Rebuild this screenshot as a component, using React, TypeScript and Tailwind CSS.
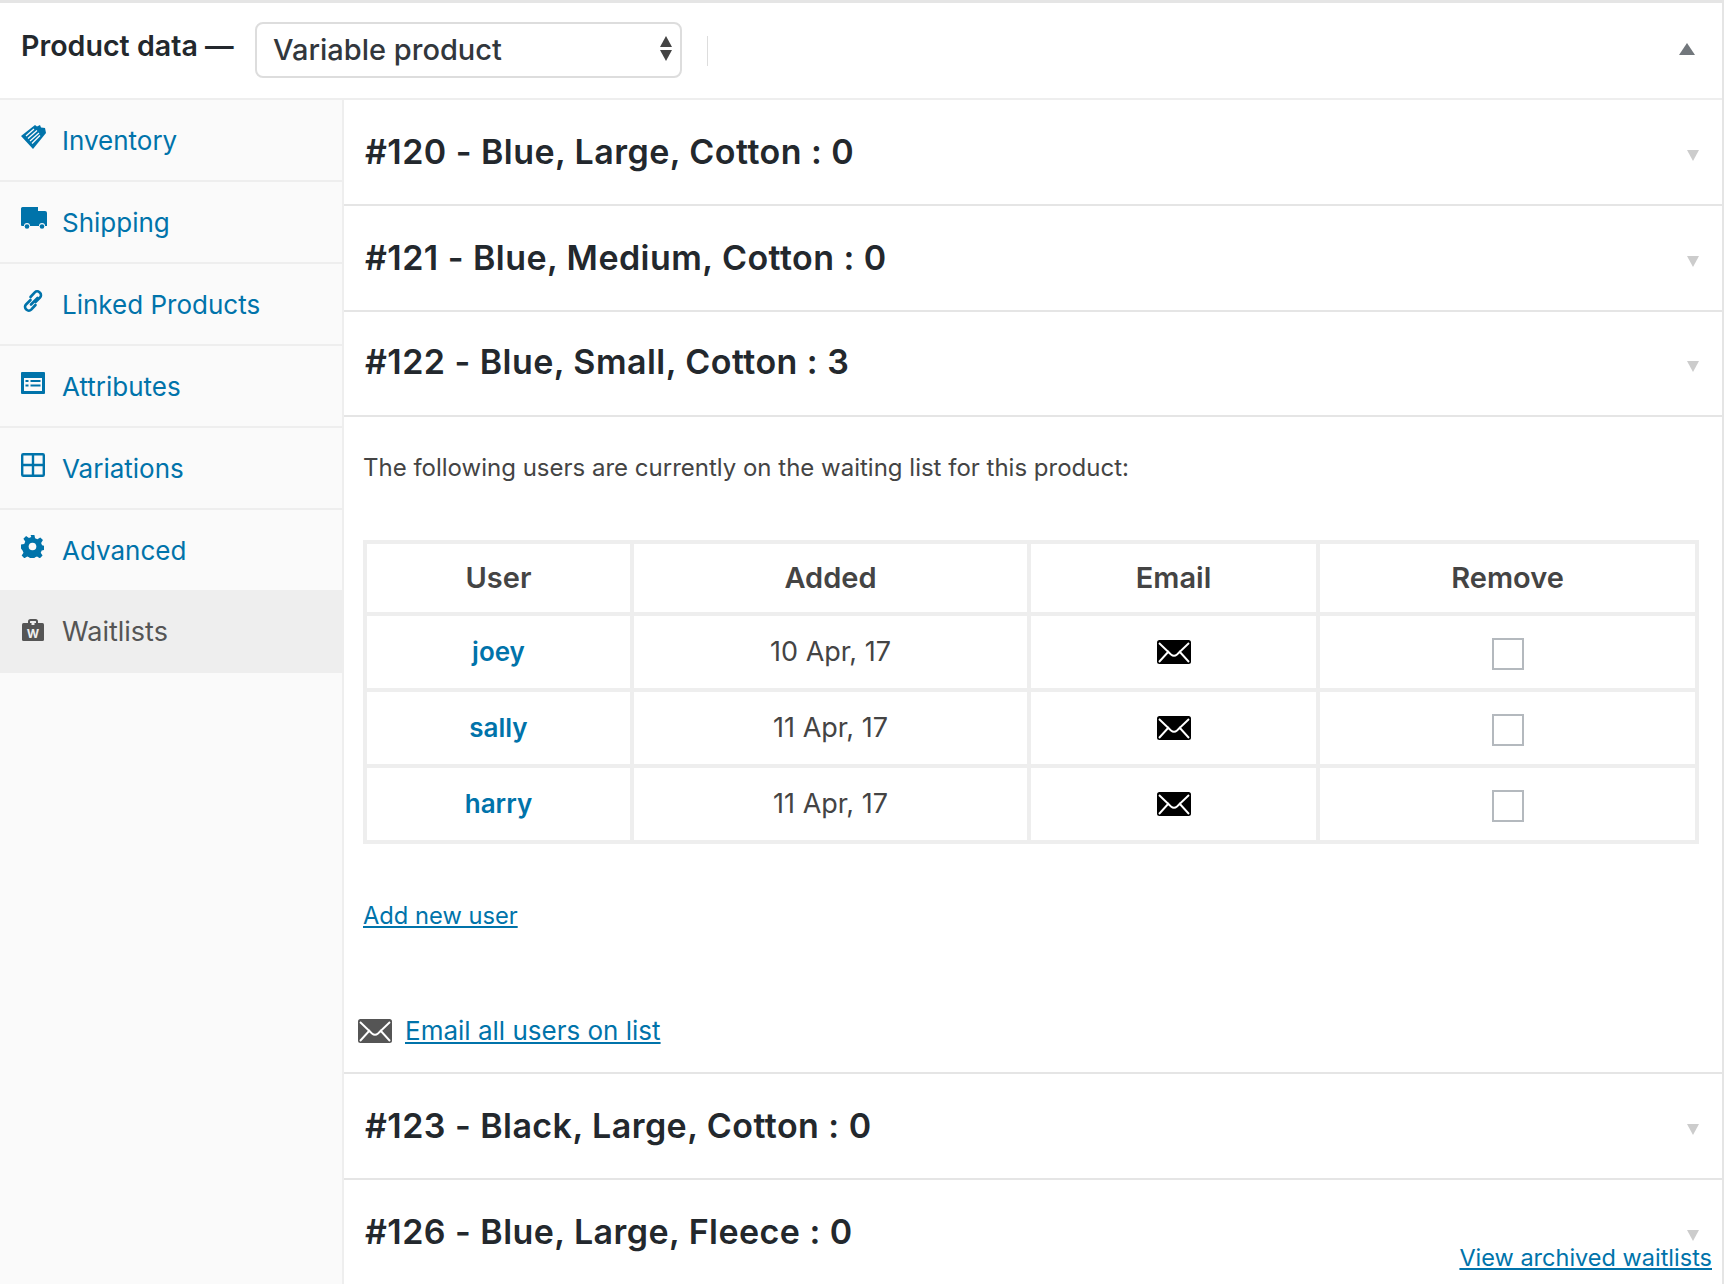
const NAV = [
  { label: 'Inventory', icon: <InventoryIcon /> },
  { label: 'Shipping', icon: <TruckIcon /> },
  { label: 'Linked Products', icon: <LinkIcon /> },
  { label: 'Attributes', icon: <AttributesIcon /> },
  { label: 'Variations', icon: <GridIcon /> },
  { label: 'Advanced', icon: <GearIcon /> },
]

const USERS = [
  { name: 'joey', added: '10 Apr, 17' },
  { name: 'sally', added: '11 Apr, 17' },
  { name: 'harry', added: '11 Apr, 17' },
]

function InventoryIcon() {
  return (
    <svg width="26" height="26" viewBox="0 0 26 26" className="text-[#0073aa]">
      <path d="M0 12 14 1l2 1.500L19 1l1 2.500 4 .5 1 5-13 16z" fill="currentColor" />
      <path d="m5 12 8-7M7 14.500l9-8M9 17l9-8M11 19.500l8-8" stroke="#fafafa" strokeWidth="1.300" />
    </svg>
  )
}

function TruckIcon() {
  return (
    <svg width="26" height="23" viewBox="0 0 26 23" className="text-[#0073aa]">
      <path d="M0 1.500Q0 0 1.500 0H17v4h7q2 0 2 2v13h-2a3 3 0 0 0-6 0H9a3 3 0 0 0-6 0H1q-1 0-1-1z" fill="currentColor" />
      <circle cx="6" cy="19.500" r="2.300" fill="currentColor" />
      <circle cx="21" cy="19.500" r="2.300" fill="currentColor" />
    </svg>
  )
}

function LinkIcon() {
  return (
    <svg width="24" height="24" viewBox="0 0 24 24" fill="none" stroke="#0073aa" strokeWidth="2.600" strokeLinecap="round" strokeLinejoin="round">
      <path d="M10 15.500 16.500 9M9.500 11 5 15.500a3.300 3.300 0 0 0 0 4.700l.5.500a3.300 3.300 0 0 0 4.700 0L14.500 16" />
      <path d="M14.500 13 19 8.500a3.300 3.300 0 0 0 0-4.700l-.5-.5a3.300 3.300 0 0 0-4.700 0L9.500 8" />
    </svg>
  )
}

function AttributesIcon() {
  return (
    <svg width="24" height="22" viewBox="0 0 24 22">
      <rect width="24" height="22" rx="1" fill="#0073aa" />
      <rect x="3" y="6" width="18" height="13" fill="#fafafa" />
      <path d="M4.500 9h3M4.500 13.500h3M9.500 9h10M9.500 13.500h10" stroke="#0073aa" strokeWidth="2" />
    </svg>
  )
}

function GridIcon() {
  return (
    <svg width="24" height="24" viewBox="0 0 24 24" fill="none" stroke="#0073aa" strokeWidth="2.400">
      <rect x="1.200" y="1.200" width="21.600" height="21.600" rx="1" />
      <path d="M12 1v22M1 12h22" />
    </svg>
  )
}

function GearIcon() {
  return (
    <svg width="23" height="23" viewBox="0 0 24 24">
      <path
        d="M10 0h4l.7 3.400 2.400 1 3-1.900 2.800 2.800-1.900 3 1 2.400 3 .7v4l-3.400.7-1 2.400 1.900 3-2.800 2.800-3-1.900-2.400 1-.7 3.400h-4l-.7-3.400-2.400-1-3 1.900-2.800-2.800 1.900-3-1-2.400L0 14v-4l3.400-.7 1-2.400-1.900-3 2.800-2.800 3 1.900 2.400-1z"
        fill="#0073aa"
      />
      <circle cx="12" cy="12" r="4" fill="#fafafa" />
    </svg>
  )
}

function BagIcon() {
  return (
    <svg width="22" height="22" viewBox="0 0 22 22">
      <path d="M7 4V2.500Q7 1 8.500 1h5Q15 1 15 2.500V4" fill="none" stroke="#555" strokeWidth="2" />
      <rect y="4" width="22" height="18" rx="1.500" fill="#555" />
      <rect x="9.500" y="3" width="3" height="3" fill="#eee" />
      <text x="11" y="19" textAnchor="middle" fontSize="12" fontWeight="700" fill="#eee" fontFamily="Inter, sans-serif">W</text>
    </svg>
  )
}

function Envelope({ color, className }: { color: string; className: string }) {
  return (
    <svg viewBox="0 0 34 24" className={className}>
      <rect width="34" height="24" rx="2.500" fill={color} />
      <path d="M2 3 14 14.500q3 2.500 6 0L32 3M2 22l10-11M32 22 22 11" fill="none" stroke="#fff" strokeWidth="1.900" />
    </svg>
  )
}

function Variation({ title, small }: { title: string; small?: boolean }) {
  return (
    <div className={small
      ? 'flex h-[105px] items-center justify-between border-b-2 border-[#e5e5e5] pl-[21px] pr-[23px]'
      : 'flex h-[106px] items-center justify-between border-b-2 border-[#e5e5e5] pl-[21px] pr-[23px]'}>
      <h3 className={small
        ? 'pb-[4px] text-[34px] leading-none font-semibold tracking-[0.45px] text-[#23282d]'
        : 'pb-[1px] text-[34px] leading-none font-semibold tracking-[0.45px] text-[#23282d]'}>{title}</h3>
      <span className="mt-[6px] h-0 w-0 border-x-[6.500px] border-t-[11px] border-x-transparent border-t-[#cccccc]" />
    </div>
  )
}

export default function App() {
  return (
    <div className="relative h-[1284px] overflow-hidden border-t-[3px] border-r-2 border-[#e5e5e5] bg-white font-['Inter',sans-serif] text-[#444]">
      {/* Header */}
      <div className="flex h-[97px] items-center border-b-2 border-[#eee] pl-[21px] pr-[27px]">
        <span className="mb-[8px] w-[234px] text-[28.600px] font-semibold text-[#23282d]">Product data —</span>
        <div className="relative -mt-[2px]">
          <select className="h-[56px] w-[427px] appearance-none rounded-[8px] border-2 border-[#ddd] bg-white pl-[16px] text-[29px] font-medium text-[#32373c] outline-none">
            <option>Variable product</option>
          </select>
          <div className="absolute right-[10px] top-[14px] flex flex-col gap-[3px]">
            <span className="h-0 w-0 border-x-[6px] border-b-[11px] border-x-transparent border-b-[#444]" />
            <span className="h-0 w-0 border-x-[6px] border-t-[11px] border-x-transparent border-t-[#444]" />
          </div>
        </div>
        <span className="ml-[25px] h-[30px] w-px bg-[#ddd]" />
        <span className="mb-[4px] ml-auto h-0 w-0 border-x-[8px] border-b-[12px] border-x-transparent border-b-[#72777c]" />
      </div>

      <div className="flex h-[1184px]">
        {/* Sidebar */}
        <nav className="w-[344px] shrink-0 border-r-2 border-[#eee] bg-[#fafafa]">
          <div>
            {NAV.map(item => (
              <a key={item.label} href="#" className="flex h-[82px] items-center border-b-2 border-[#eee] pl-[21px] pt-[1px] text-[26px] text-[#0073aa] last:h-[80px] last:border-b-0">
                <span className="flex w-[41px] -translate-y-[4px]">{item.icon}</span>
                {item.label}
              </a>
            ))}
          </div>
          <a href="#" className="flex h-[83px] items-center bg-[#eee] pl-[22px] pt-[2px] text-[27px] text-[#555]">
            <span className="flex w-[40px] -translate-y-[3px]"><BagIcon /></span>
            Waitlists
          </a>
        </nav>

        {/* Variations */}
        <main className="min-w-0 flex-1">
          <Variation title="#120 - Blue, Large, Cotton : 0" />
          <Variation title="#121 - Blue, Medium, Cotton : 0" />
          <Variation title="#122 - Blue, Small, Cotton : 3" small />

          <div className="h-[657px] border-b-2 border-[#e5e5e5] pl-[19px] pr-[22px]">
            <p className="pt-[31px] text-[24px] leading-[40px]">The following users are currently on the waiting list for this product:</p>

            <table className="mt-[52px] h-[304px] w-[1336px] table-fixed border-collapse border-4 border-[#e9e9e9] text-center text-[27px]">
              <colgroup>
                <col className="w-[267px]" />
                <col className="w-[397px]" />
                <col className="w-[289px]" />
                <col />
              </colgroup>
              <thead>
                <tr className="h-[72px]">
                  {['User', 'Added', 'Email', 'Remove'].map(h => (
                    <th key={h} className="border-4 border-[#eee] text-[29px] font-semibold">{h}</th>
                  ))}
                </tr>
              </thead>
              <tbody>
                {USERS.map(u => (
                  <tr key={u.name}>
                    <td className="border-4 border-[#eee]">
                      <a href="#" className="text-[26px] font-semibold text-[#0073aa]">{u.name}</a>
                    </td>
                    <td className="border-4 border-[#eee]">{u.added}</td>
                    <td className="border-4 border-[#eee]">
                      <Envelope color="#000" className="mx-auto h-[24px] w-[34px]" />
                    </td>
                    <td className="border-4 border-[#eee]">
                      <input type="checkbox" className="mx-auto mt-1 block h-[32px] w-[32px] appearance-none border-2 border-[#b4b9be] bg-white" />
                    </td>
                  </tr>
                ))}
              </tbody>
            </table>

            <a href="#" className="mt-[52px] block w-fit text-[23.700px] leading-[40px] text-[#0073aa] underline">Add new user</a>

            <div className="mt-[75px] -ml-[5px] flex items-center gap-[13px]">
              <Envelope color="#555" className="h-[24px] w-[34px]" />
              <a href="#" className="text-[26px] leading-[40px] text-[#0073aa] underline">Email all users on list</a>
            </div>
          </div>

          <Variation title="#123 - Black, Large, Cotton : 0" />
          <Variation title="#126 - Blue, Large, Fleece : 0" />
        </main>
      </div>

      <a href="#" className="absolute right-[10px] top-[1237px] text-[23.500px] leading-[36px] text-[#0073aa] underline">View archived waitlists</a>
    </div>
  )
}
